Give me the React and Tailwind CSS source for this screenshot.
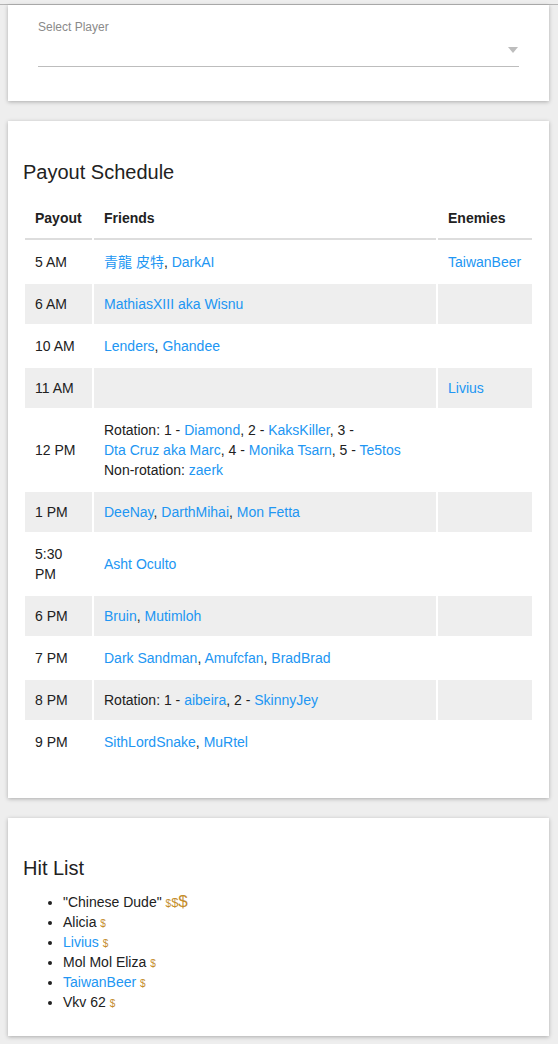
import React from "react";

const L = ({ children }) => (
  <a className="text-[#2196f3] whitespace-nowrap no-underline">{children}</a>
);

const rows = [
  { t: "5 AM", f: <><L>青龍 皮特</L>, <L>DarkAI</L></>, e: <L>TaiwanBeer</L> },
  { t: "6 AM", f: <L>MathiasXIII aka Wisnu</L> },
  { t: "10 AM", f: <><L>Lenders</L>, <L>Ghandee</L></> },
  { t: "11 AM", f: null, e: <L>Livius</L> },
  {
    t: "12 PM",
    f: (
      <>
        Rotation: 1 - <L>Diamond</L>, 2 - <L>KaksKiller</L>, 3 - <L>Dta Cruz aka Marc</L>, 4 - <L>Monika Tsarn</L>, 5 - <L>Te5tos</L>
        <br />
        Non-rotation: <L>zaerk</L>
      </>
    ),
  },
  { t: "1 PM", f: <><L>DeeNay</L>, <L>DarthMihai</L>, <L>Mon Fetta</L></> },
  { t: "5:30 PM", f: <L>Asht Oculto</L> },
  { t: "6 PM", f: <><L>Bruin</L>, <L>Mutimloh</L></> },
  { t: "7 PM", f: <><L>Dark Sandman</L>, <L>Amufcfan</L>, <L>BradBrad</L></> },
  { t: "8 PM", f: <>Rotation: 1 - <L>aibeira</L>, 2 - <L>SkinnyJey</L></> },
  { t: "9 PM", f: <><L>SithLordSnake</L>, <L>MuRtel</L></> },
];

const D = ({ size }) => (
  <span className={`text-[#c48d2c] leading-none ${size}`}>$</span>
);

const card = "bg-white w-[541px] ml-[8px] shadow-[0_1px_4px_rgba(0,0,0,0.28)]";

export default function App() {
  return (
    <div
      className="min-h-[1044px] bg-[#eeeeee] text-[#212121] text-[14px] leading-[20px]"
      style={{ fontFamily: '"Liberation Sans", Arial, "Noto Sans CJK TC", sans-serif' }}
    >
      <div className="h-[4px] bg-[#eeeeee]" />
      <div className="h-[1px] bg-[#b4b4b4]" />
      {/* Card 1 */}
      <div className={`${card} pt-[15px] pb-[34px] px-[30px]`}>
        <div className="text-[12px] leading-[14px] text-[#8a8a8a]">Select Player</div>
        <div className="h-[33px] border-b border-[#bdbdbd] flex items-center justify-end pr-[1px]">
          <svg width="10" height="6" viewBox="0 0 10 6">
            <path d="M0 0 L10 0 L5 6 Z" fill="#bdbdbd" />
          </svg>
        </div>
      </div>

      {/* Card 2 */}
      <div className={`${card} mt-[20px] px-[15px] pt-[39px] pb-[34px]`}>
        <h3 className="text-[20px] leading-[24px] text-[#222] font-normal">Payout Schedule</h3>
        <table className="mt-[12px] w-full border-separate border-spacing-[2px] text-left">
          <thead>
            <tr>
              <th className="w-[67px] px-[10px] py-[10px] font-bold border-b-2 border-[#dddddd]">Payout</th>
              <th className="px-[10px] py-[10px] font-bold border-b-2 border-[#dddddd]">Friends</th>
              <th className="w-[94px] px-[10px] py-[10px] font-bold border-b-2 border-[#dddddd]">Enemies</th>
            </tr>
          </thead>
          <tbody>
            {rows.map((r, i) => {
              const bg = i % 2 === 1 ? "bg-[#eeeeee]" : "";
              return (
                <tr key={i}>
                  <td className={`${bg} px-[10px] py-[10px] align-middle`}>{r.t}</td>
                  <td className={`${bg} px-[10px] py-[10px] align-middle`}>{r.f}</td>
                  <td className={`${bg} px-[10px] py-[10px] align-middle`}>{r.e}</td>
                </tr>
              );
            })}
          </tbody>
        </table>
      </div>

      {/* Card 3 */}
      <div className={`${card} mt-[20px] px-[15px] pt-[38px] pb-[24px]`}>
        <h3 className="text-[20px] leading-[24px] text-[#222] font-normal">Hit List</h3>
        <ul className="mt-[12px] pl-[40px] list-disc">
          <li className="h-[20px]">"Chinese Dude" <D size="text-[10px]" /><D size="text-[13px]" /><D size="text-[17px]" /></li>
          <li className="h-[20px]">Alicia <D size="text-[10px]" /></li>
          <li className="h-[20px]"><L>Livius</L> <D size="text-[10px]" /></li>
          <li className="h-[20px]">Mol Mol Eliza <D size="text-[10px]" /></li>
          <li className="h-[20px]"><L>TaiwanBeer</L> <D size="text-[10px]" /></li>
          <li className="h-[20px]">Vkv 62 <D size="text-[10px]" /></li>
        </ul>
      </div>
      <div className="h-[9px]" />
    </div>
  );
}
